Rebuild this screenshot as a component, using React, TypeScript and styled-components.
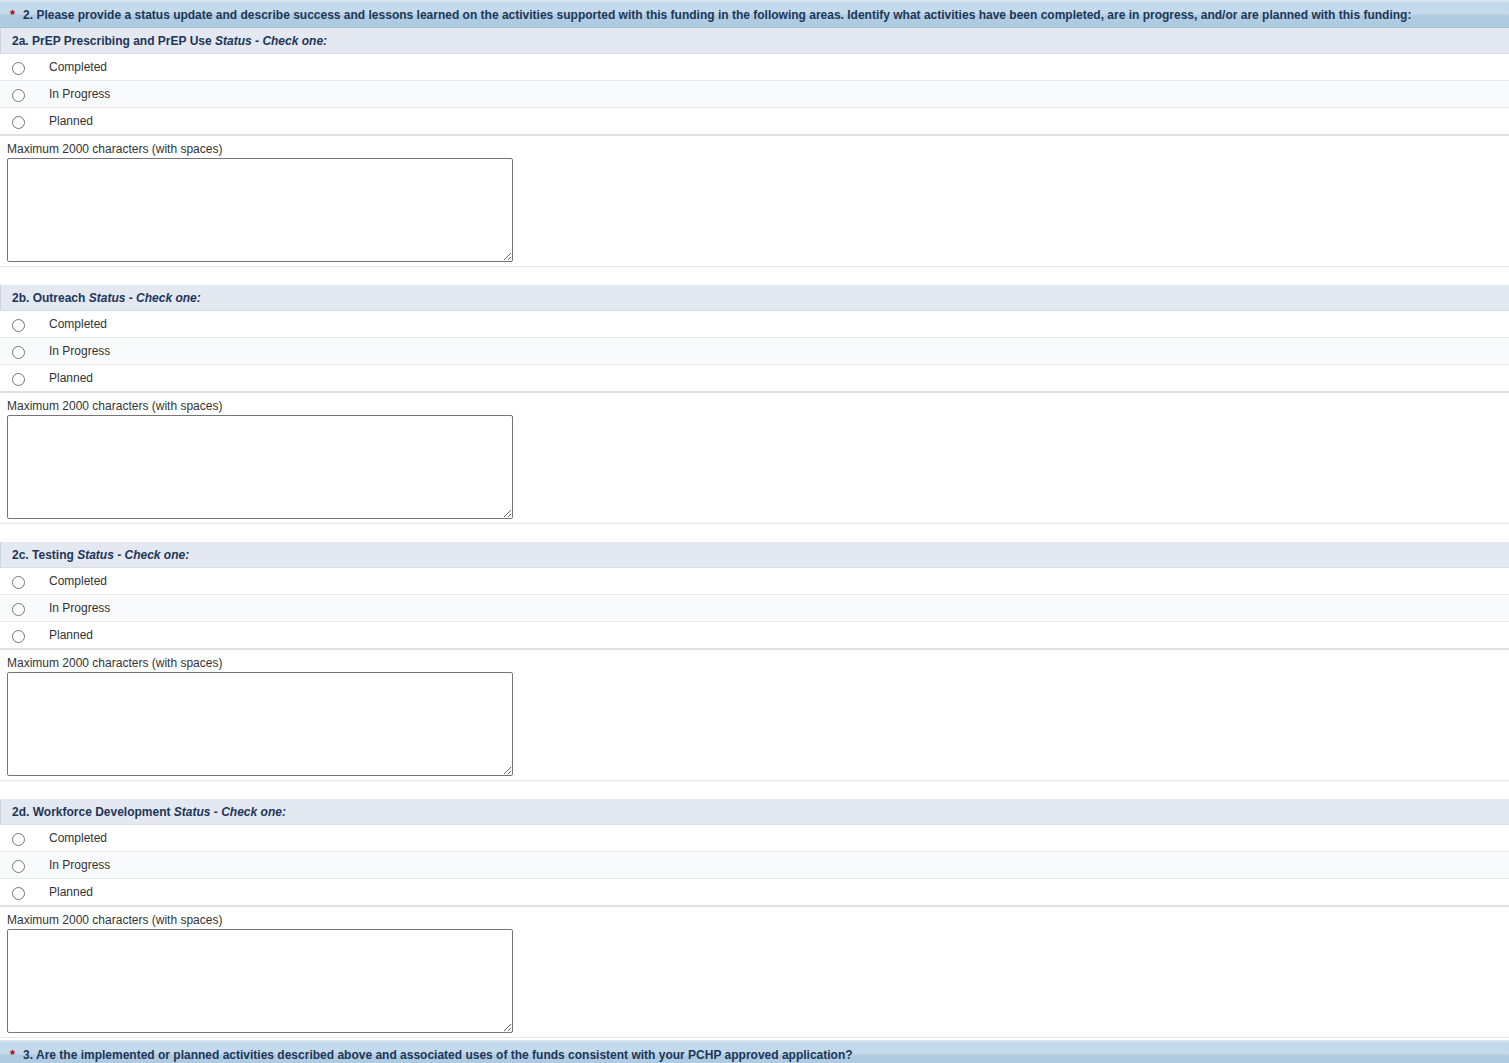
import React from "react";
import styled, { createGlobalStyle } from "styled-components";

const Global = createGlobalStyle`
  html, body { margin: 0; padding: 0; background: #fff; }
  body { font-family: "Liberation Sans", Arial, sans-serif; font-size: 12px; color: #333; }
`;

const Page = styled.div`
  width: 1509px;
  display: flex;
  flex-direction: column;
`;

const QuestionHeader = styled.div<{ $spaced?: boolean }>`
  height: 28px;
  box-sizing: border-box;
  display: flex;
  align-items: center;
  gap: 8px;
  padding: 1px 0 0 10px;
  margin-top: ${(p) => (p.$spaced ? "2px" : "0")};
  border-top: 2px solid #d7e5f1;
  border-bottom: 1px solid #a3bdd4;
  background: linear-gradient(#c4daeb 0%, #c4daeb 45%, #afcbe1 55%, #afcbe1 100%);
  color: #1c3658;
  font-weight: bold;
  font-size: 12px;
`;

const Star = styled.span`
  color: #b0000e;
  font-size: 13px;
  line-height: 1;
  position: relative;
  top: -1px;
`;

const Section = styled.div<{ $gapTop: boolean }>`
  display: flex;
  flex-direction: column;
  margin-top: ${(p) => (p.$gapTop ? "18px" : "0")};
`;

const SubHeader = styled.div`
  height: 26px;
  box-sizing: border-box;
  display: flex;
  align-items: center;
  padding: 1px 0 0 11px;
  background: #e4e8f1;
  border-left: 1px solid #cfd5e0;
  border-bottom: 1px solid #d9dde6;
  color: #1c3658;
  font-size: 12px;
  font-weight: bold;
`;

const SubTitle = styled.span`
  white-space: pre;
`;

const I = styled.i`
  font-style: italic;
`;

const OptionList = styled.div`
  display: flex;
  flex-direction: column;
`;

const OptionRow = styled.label<{ $alt: boolean; $last: boolean }>`
  height: ${(p) => (p.$last ? "28px" : "27px")};
  box-sizing: border-box;
  display: flex;
  align-items: center;
  background: ${(p) => (p.$alt ? "#f9fafc" : "#fff")};
  border-bottom: ${(p) => (p.$last ? "2px solid #e0e0e0" : "1px solid #e8e8e8")};
  font-size: 12px;
  color: #333;
`;

const Radio = styled.input`
  margin: 2px 0 0 12px;
  width: 13px;
  height: 13px;
`;

const OptionText = styled.span`
  margin-left: 24px;
`;

const FieldBlock = styled.div`
  display: flex;
  flex-direction: column;
  padding: 5px 0 4px 7px;
  border-bottom: 1px solid #e6e6e6;
`;

const FieldLabel = styled.div`
  font-size: 12px;
  color: #333;
  line-height: 16px;
  height: 17px;
`;

const TextArea = styled.textarea`
  width: 506px;
  height: 104px;
  box-sizing: border-box;
  border: 1px solid #767676;
  border-radius: 2px;
  padding: 2px;
  margin: 0;
  font-family: "Liberation Sans", Arial, sans-serif;
  font-size: 12px;
  resize: both;
`;

const sections = [
  { code: "2a.", name: "PrEP Prescribing and PrEP Use" },
  { code: "2b.", name: "Outreach" },
  { code: "2c.", name: "Testing" },
  { code: "2d.", name: "Workforce Development" },
];

const options = ["Completed", "In Progress", "Planned"];

export default function App() {
  return (
    <Page>
      <Global />
      <QuestionHeader>
        <Star>*</Star>
        <span>
          2. Please provide a status update and describe success and lessons learned on the activities supported with this funding in the following areas. Identify what activities have been completed, are in progress, and/or are planned with this funding:
        </span>
      </QuestionHeader>
      {sections.map((s, si) => (
        <Section key={s.code} $gapTop={si > 0}>
          <SubHeader>
            <SubTitle>
              {s.code} {s.name} <I>Status</I> - <I>Check one:</I>
            </SubTitle>
          </SubHeader>
          <OptionList>
            {options.map((o, oi) => (
              <OptionRow key={o} $alt={oi === 1} $last={oi === 2}>
                <Radio type="radio" name={`status-${s.code}`} />
                <OptionText>{o}</OptionText>
              </OptionRow>
            ))}
          </OptionList>
          <FieldBlock>
            <FieldLabel>Maximum 2000 characters (with spaces)</FieldLabel>
            <TextArea />
          </FieldBlock>
        </Section>
      ))}
      <QuestionHeader $spaced>
        <Star>*</Star>
        <span>
          3. Are the implemented or planned activities described above and associated uses of the funds consistent with your PCHP approved application?
        </span>
      </QuestionHeader>
    </Page>
  );
}
